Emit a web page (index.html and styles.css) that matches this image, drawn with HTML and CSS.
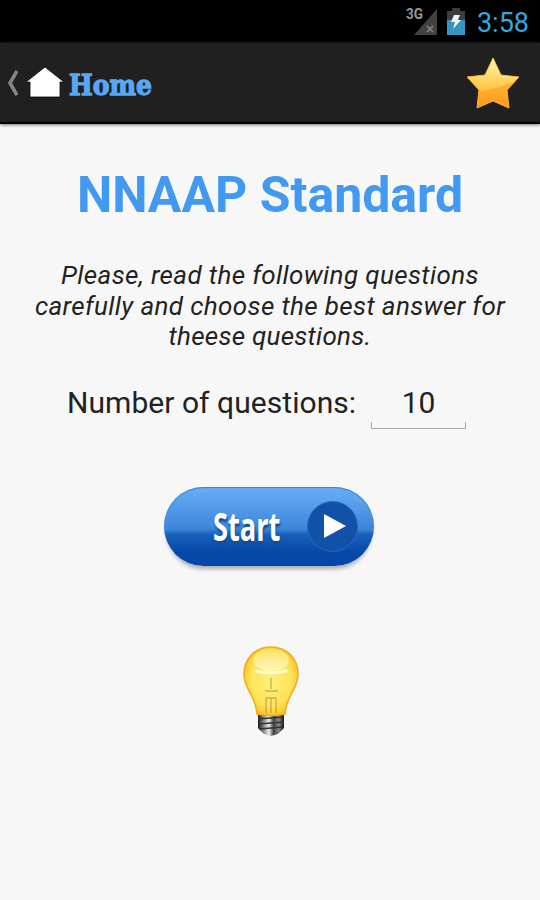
FILE: index.html
```html
<!DOCTYPE html>
<html lang="en">
<head>
<meta charset="utf-8">
<title>NNAAP Standard</title>
<link rel="stylesheet" href="styles.css">
</head>
<body>
<div class="status">
  <svg class="signal" width="32" height="30" viewBox="0 0 32 30">
    <path d="M31 4V30H8Z" fill="#424242"/>
    <path d="M21 21l6 6M27 21l-6 6" stroke="#888" stroke-width="1.5"/>
    <text x="0" y="14" class="network" textLength="17" lengthAdjust="spacingAndGlyphs">3G</text>
  </svg>
  <svg class="battery" width="18" height="27" viewBox="0 0 18 27">
    <path d="M0 3H5V0H13V3H18V12H0Z" fill="#3d3d3d"/>
    <path d="M0 12H18V27H0Z" fill="#3595bd"/>
    <path d="M7 7H13L11 12H14L6 21L8 14H4Z" fill="#f2f5f7"/>
  </svg>
  <span class="clock">3:58</span>
</div>
<header class="bar">
  <a class="home">
    <svg class="back" width="12" height="26" viewBox="0 0 12 26"><path d="M11 1L4 13L11 25" fill="none" stroke="#858585" stroke-width="3.6"/></svg>
    <svg class="house" width="40" height="32" viewBox="0 0 40 32"><path d="M20 1L39 16H35V31H5V16H1Z" fill="#fff" stroke="#080808" stroke-width=".8"/></svg>
    <span class="home-text">Home</span>
  </a>
  <svg class="star" width="56" height="56" viewBox="0 0 56 56">
    <defs>
      <linearGradient id="gold" x1="0" y1="0" x2="0" y2="1"><stop offset="0" stop-color="#fff2b0"/><stop offset=".5" stop-color="#ffd055"/><stop offset="1" stop-color="#ff981c"/></linearGradient>
      <linearGradient id="amber" x1="0" y1="0" x2="0" y2="1"><stop offset="0" stop-color="#ffb52f"/><stop offset="1" stop-color="#ff9820"/></linearGradient>
      <clipPath id="starShape"><path d="M28 3L36 20L54 22L42 35L44 53L28 46L12 53L14 35L2 22L20 20Z"/></clipPath>
    </defs>
    <path d="M28 3L36 20L54 22L42 35L44 53L28 46L12 53L14 35L2 22L20 20Z" fill="url(#gold)" stroke="#ffb634" stroke-width="1" stroke-linejoin="round"/>
    <path clip-path="url(#starShape)" d="M10 37Q31 35 55 24V55H8Z" fill="url(#amber)"/>
    <path d="M28 4L35 21L51 23" fill="none" stroke="#fff1a6" stroke-width="1" opacity=".6"/>
  </svg>
</header>
<main class="content">
  <h1 class="title">NNAAP Standard</h1>
  <p class="intro"><span class="line wide">Please, read the following questions</span> <span class="line wide">carefully and choose the best answer for</span> <span class="line">theese questions.</span></p>
  <div class="count"><span>Number of questions:</span><span class="field">10</span></div>
  <div class="start">
    <span class="start-text">Start</span>
    <span class="play"><svg width="24" height="26" viewBox="0 0 24 26"><path d="M1 1L23 13L1 25Z" fill="#fff"/></svg></span>
  </div>
  <svg class="bulb" width="60" height="94" viewBox="0 0 60 94">
    <defs>
      <radialGradient id="glass" cx=".5" cy=".48" r=".57"><stop offset="0" stop-color="#fff07a"/><stop offset=".65" stop-color="#fce45a"/><stop offset=".87" stop-color="#ffcc30"/><stop offset="1" stop-color="#f9a90f"/></radialGradient>
      <linearGradient id="shine" x1="0" y1="0" x2="0" y2="1"><stop offset="0" stop-color="#ffe56b"/><stop offset="1" stop-color="#fffbd0"/></linearGradient>
      <linearGradient id="metal"><stop offset="0" stop-color="#151515"/><stop offset=".25" stop-color="#999"/><stop offset=".42" stop-color="#eee"/><stop offset=".6" stop-color="#444"/><stop offset=".8" stop-color="#888"/><stop offset="1" stop-color="#111"/></linearGradient>
    </defs>
    <path d="M17 70H43V84L37 90L30 92L23 90L17 84Z" fill="url(#metal)"/>
    <path d="M17 75L43 73M17 80L43 78M18 85L42 83" stroke="#333" stroke-width="1.4"/>
    <path d="M30 3C14 3 3 15 3 30C3 46 15 51 16 70Q30 73 44 70C45 51 57 46 57 30C57 15 46 3 30 3Z" fill="url(#glass)" stroke="#f3ac22" stroke-width="1.6"/>
    <ellipse cx="30" cy="16" rx="18" ry="11" fill="url(#shine)" opacity=".8"/>
    <path d="M15 27Q30 31 45 27" fill="none" stroke="#fffbd0" stroke-width="3" stroke-linecap="round"/>
    <path d="M30 34V45M24 47H37M25 69V54H35V69M30 54V69" fill="none" stroke="#b59a42" stroke-width="1"/>
  </svg>
</main>
</body>
</html>
```
FILE: styles.css
```css
* { box-sizing: border-box; }
body { margin: 0; height: 900px; overflow: hidden; background: #f7f7f7; font-family: Roboto, sans-serif; color: #222; }
.status { height: 43px; background: #000; display: flex; align-items: flex-start; justify-content: flex-end; padding-right: 11px; }
.signal { margin: 5px 9px 0 0; }
.network { font: 700 14px Roboto, sans-serif; fill: #999; }
.battery { margin: 8px 12px 0 0; }
.clock { font-size: 27px; line-height: 32px; padding-top: 7px; color: #33a9dc; }
.bar { height: 81px; background: #202020; border-bottom: 2px solid #050505; display: flex; align-items: center; justify-content: space-between; padding: 0 19px 0 6px; box-shadow: 0 1px 3px #777; }
.home { display: flex; align-items: center; padding-top: 1px; }
.back { margin-right: 7px; }
.house { margin-right: 4px; margin-top: -2px; }
.home-text { font: 700 27px/36px "DejaVu Serif", serif; color: #58a7f5; -webkit-text-stroke: 1.3px #58a7f5; text-shadow: 0 1px 1px #000; width: 84px; transform: scaleX(.93); transform-origin: left; margin-top: 6px; }
.content { display: flex; flex-direction: column; align-items: center; }
.title { margin: 41px 0 0; font-size: 50px; line-height: 60px; font-weight: 700; color: #4299f2; white-space: nowrap; }
.intro { margin: 35px 0 0; font-size: 26px; line-height: 30.5px; font-style: italic; text-align: center; }
.line { display: block; white-space: nowrap; letter-spacing: .25px; }
.wide { letter-spacing: .37px; }
.count { margin: 33px 0 0; padding-left: 67px; align-self: flex-start; display: flex; font-size: 30px; line-height: 36px; letter-spacing: .05px; white-space: nowrap; }
.field { width: 95px; height: 44px; margin-left: 15px; text-align: center; background: linear-gradient(#aaa, #aaa) left bottom / 1px 7px no-repeat, linear-gradient(#aaa, #aaa) right bottom / 1px 7px no-repeat, linear-gradient(#aaa, #aaa) bottom / 100% 1px no-repeat; }
.start { width: 210px; height: 79px; margin: 58px 2px 0 0; border-radius: 40px; background: linear-gradient(#67adfa 0, #579feb 22%, #3c85d9 53%, #1861bd 60%, #0648a7 82%, #0347a9 100%); box-shadow: inset 0 1px 1px #3483db, 0 6px 4px -3px #aaa; display: flex; align-items: center; padding-left: 49px; }
.start-text { font: 700 34px/42px "Open Sans", sans-serif; color: #fff; width: 68px; transform-origin: left; transform: scale(.8, 1.17); text-shadow: 1px 2px 2px #174b8b; }
.play { margin-left: 26px; width: 51px; height: 51px; border-radius: 50%; background: #1251a8; border: 1px solid #2767bd; display: flex; align-items: center; justify-content: center; padding-left: 5px; }
.bulb { margin: 78px 0 0 2px; }
```
